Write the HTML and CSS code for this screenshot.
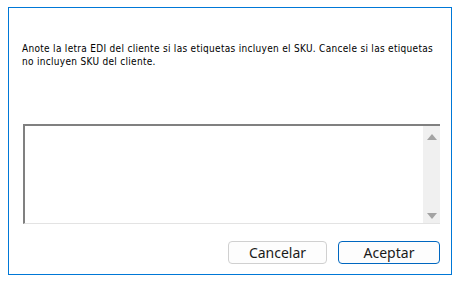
FILE: index.html
```html
<!DOCTYPE html>
<html lang="es">
<head>
    <meta charset="UTF-8">
    <title>Etiqueta EDI</title>
    <link rel="stylesheet" href="styles.css">
</head>
<body>
    <div class="dialog">
        <p class="prompt">Anote la letra EDI del cliente si las etiquetas incluyen el SKU. Cancele si las etiquetas no incluyen SKU del cliente.</p>

        <div class="input-box">
            <div class="input-area"></div>
            <div class="scrollbar">
                <span class="arrow up"></span>
                <span class="arrow down"></span>
            </div>
        </div>

        <div class="actions">
            <button class="btn">Cancelar</button>
            <button class="btn primary">Aceptar</button>
        </div>
    </div>
</body>
</html>
```

FILE: styles.css
```css
body {
    margin: 0;
    background-color: #fff;
    font-family: "Liberation Sans", Arial, sans-serif;
}

.dialog {
    box-sizing: border-box;
    width: 444px;
    height: 268px;
    margin: 7px 0 0 8px;
    border: 1px solid #0078d7;
    padding: 0 11px 10px 14px;
    display: flex;
    flex-direction: column;
}

.prompt {
    margin: 34px 0 0 -1px;
    font-family: "DejaVu Sans Condensed", "DejaVu Sans", sans-serif;
    font-size: 10px;
    letter-spacing: 0.3px;
    line-height: 13px;
    color: #000;
    width: 414px;
}

.input-box {
    margin-top: 56px;
    height: 100px;
    display: flex;
    border-top: 2px solid #808080;
    border-left: 2px solid #808080;
    border-bottom: 1px solid #e3e3e3;
    box-sizing: border-box;
}

.input-area {
    flex: 1;
    background-color: #fff;
}

.scrollbar {
    width: 17px;
    background-color: #f0f0f0;
    display: flex;
    flex-direction: column;
    justify-content: space-between;
    align-items: center;
    padding: 8px 0 4px;
}

.arrow {
    width: 0;
    height: 0;
    border-left: 5px solid transparent;
    border-right: 5px solid transparent;
}
.arrow.up { border-bottom: 6px solid #a3a3a3; }
.arrow.down { border-top: 6px solid #a3a3a3; }

.actions {
    margin-top: auto;
    display: flex;
    justify-content: flex-end;
    gap: 11px;
}

.btn {
    width: 99px;
    height: 23px;
    box-sizing: border-box;
    border: 1px solid #d0d0d0;
    border-radius: 4px;
    background-color: #fdfdfd;
    font-family: "Noto Sans", "Open Sans", sans-serif;
    font-size: 14px;
    line-height: 20px;
    color: #1a1a1a;
    padding: 0;
}

.btn.primary {
    width: 102px;
    border-color: #0067c0;
}
```
